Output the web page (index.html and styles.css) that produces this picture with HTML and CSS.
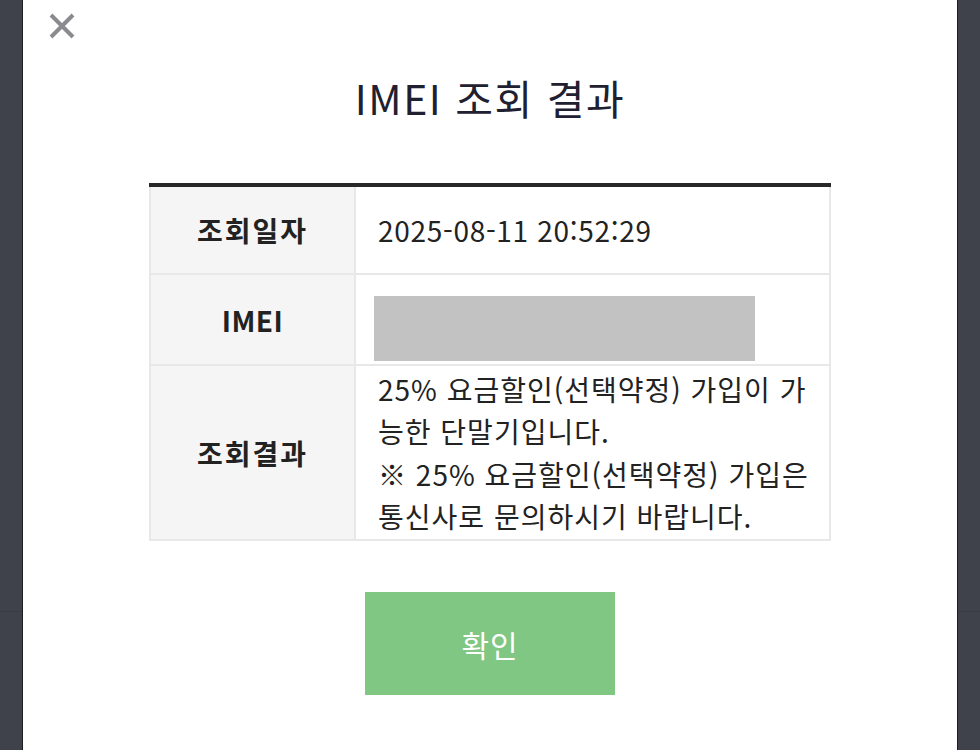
FILE: index.html
```html
<!DOCTYPE html>
<html lang="ko">

<head>
    <meta charset="UTF-8">
    <meta name="viewport" content="width=device-width, initial-scale=1.0">
    <title>IMEI 조회 결과</title>

    <link rel="stylesheet" href="styles.css">
</head>

<body>
    <div class="dimLine"></div>
    <div class="modal">
        <button class="closeBtn" aria-label="닫기">
            <svg width="26" height="26" viewBox="0 0 26 26">
                <path d="M2 2 L24 24 M24 2 L2 24" stroke="#8b8b8f" stroke-width="4" fill="none" />
            </svg>
        </button>

        <h1 class="modalTitle">IMEI 조회 결과</h1>

        <table class="resultTable">
            <tr class="rowDate">
                <th>조회일자</th>
                <td>2025-08-11 20:52:29</td>
            </tr>
            <tr class="rowImei">
                <th class="imeiHead">IMEI</th>
                <td><div class="masked"></div></td>
            </tr>
            <tr class="rowResult">
                <th>조회결과</th>
                <td class="resultText">25% 요금할인(선택약정) 가입이 가능한 단말기입니다.<br>※ 25% 요금할인(선택약정) 가입은 통신사로 문의하시기 바랍니다.</td>
            </tr>
        </table>

        <div class="btnWrap">
            <button class="okBtn">확인</button>
        </div>
    </div>
</body>

</html>
```

FILE: styles.css
```css
body {
    font-family: "Noto Sans CJK KR", "Noto Sans", sans-serif;
    background-color: #3f424b;
    margin: 0;
    padding: 0;
    height: 750px;
    overflow: hidden;
}

.dimLine {
    position: absolute;
    left: 0;
    right: 0;
    top: 611px;
    height: 1px;
    background-color: #393c44;
}

.modal {
    position: relative;
    margin: 0 22px;
    height: 750px;
    background-color: #fff;
    border-left: 1px solid #1d1d26;
    border-right: 1px solid #1d1d26;
    box-sizing: border-box;
    padding-top: 69px;
}

.closeBtn {
    position: absolute;
    left: 26px;
    top: 13px;
    padding: 0;
    border: none;
    background: none;
    cursor: pointer;
}

.modalTitle {
    margin: 0;
    text-align: center;
    font-size: 41px;
    font-weight: 400;
    letter-spacing: 1.5px;
    line-height: 56px;
    color: #1f2130;
}

.resultTable {
    width: 682px;
    margin: 58px auto 0;
    border-collapse: collapse;
    border-top: 4px solid #282828;
}

.resultTable th,
.resultTable td {
    border: 2px solid #e8e8e8;
    color: #222;
}

.resultTable th {
    width: 201px;
    background-color: #f5f5f5;
    font-size: 28px;
    font-weight: 700;
    letter-spacing: 2px;
}

.resultTable th.imeiHead {
    letter-spacing: 0.5px;
}

.resultTable td {
    padding: 0 20px 0 22px;
    font-size: 28px;
    font-weight: 400;
    letter-spacing: 0.7px;
}

.rowDate {
    height: 89px;
}

.rowImei {
    height: 91px;
}

.masked {
    width: 381px;
    height: 65px;
    margin-top: 18px;
    margin-left: -4px;
    background-color: #c2c2c2;
}

.resultText {
    height: 173px;
    line-height: 42.5px;
    letter-spacing: 1px !important;
    word-break: break-all;
}

.btnWrap {
    text-align: center;
    margin-top: 51px;
}

.okBtn {
    width: 250px;
    height: 103px;
    background-color: #80c783;
    color: #fff;
    border: none;
    font-family: inherit;
    font-size: 30px;
    letter-spacing: 1px;
    cursor: pointer;
}

.okBtn:hover {
    background-color: #74bb77;
}
```
